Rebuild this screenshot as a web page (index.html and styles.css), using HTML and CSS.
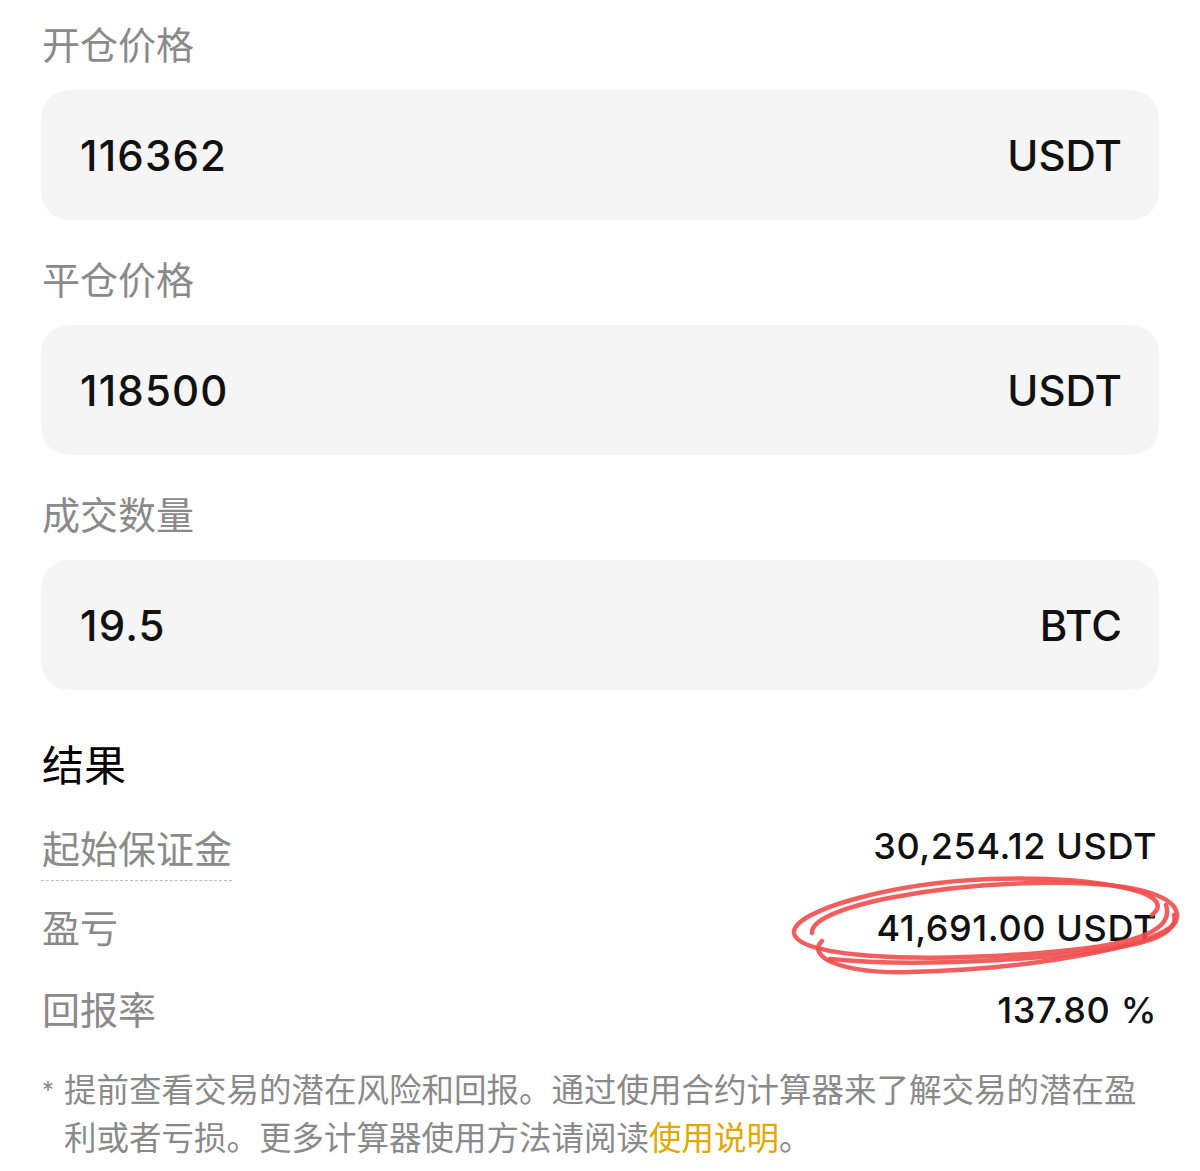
FILE: index.html
```html
<!DOCTYPE html>
<html lang="zh-CN">
<head>
    <meta charset="UTF-8">
    <meta name="viewport" content="width=device-width, initial-scale=1.0">
    <title>合约计算器</title>
    <link rel="stylesheet" href="styles.css">
</head>
<body>
    <main class="calc">
        <div class="field">
            <label class="field-label">开仓价格</label>
            <div class="field-box">
                <span class="field-value">116362</span>
                <span class="field-unit">USDT</span>
            </div>
        </div>

        <div class="field">
            <label class="field-label">平仓价格</label>
            <div class="field-box">
                <span class="field-value">118500</span>
                <span class="field-unit">USDT</span>
            </div>
        </div>

        <div class="field">
            <label class="field-label">成交数量</label>
            <div class="field-box">
                <span class="field-value">19.5</span>
                <span class="field-unit">BTC</span>
            </div>
        </div>

        <section class="result">
            <h2 class="result-title">结果</h2>
            <div class="result-row">
                <span class="result-label dotted">起始保证金</span>
                <span class="result-value">30,254.12 USDT</span>
            </div>
            <div class="result-row">
                <span class="result-label">盈亏</span>
                <span class="result-value">41,691.00 USDT</span>
                <svg class="scribble" width="393" height="105" viewBox="0 0 393 105" fill="none">
                    <path d="M362 44 C392 20 300 5 200 8 C100 12 2 40 4 62 C8 86 120 92 250 82 C330 76 386 64 376 34" />
                    <path d="M22 62 C20 36 150 10 282 12 C362 14 393 30 386 50 C376 73 250 98 120 101 C52 103 16 86 32 70" />
                    <path d="M40 88 C120 96 260 90 340 74 C370 68 388 58 384 44" />
                </svg>
            </div>
            <div class="result-row">
                <span class="result-label">回报率</span>
                <span class="result-value">137.80 %</span>
            </div>
        </section>

        <p class="note">
            <span class="note-star">*</span>
            <span class="note-text">提前查看交易的潜在风险和回报。通过使用合约计算器来了解交易的潜在盈利或者亏损。更多计算器使用方法请阅读<a href="#" class="note-link">使用说明</a>。</span>
        </p>
    </main>
</body>
</html>
```

FILE: styles.css
```css
body {
    margin: 0;
    background-color: #FFF;
    font-family: Inter, "Noto Sans CJK SC", sans-serif;
    color: #111;
}

.calc {
    padding: 20px 41px 0 41px;
}

.field {
    margin-bottom: 35px;
}

.field-label {
    display: block;
    font-size: 38px;
    line-height: 50px;
    color: #8a8a8a;
    padding-left: 1px;
}

.field-box {
    margin-top: 20px;
    height: 130px;
    background-color: #f5f5f5;
    border-radius: 28px;
    display: flex;
    justify-content: space-between;
    align-items: center;
    padding: 0 37px 0 39px;
}

.field-value,
.field-unit {
    font-size: 42px;
    font-weight: 500;
    color: #111;
}

.field-value {
    letter-spacing: 1.2px;
}

.result {
    margin-top: 48px;
}

.result-title {
    margin: 0;
    font-size: 42px;
    line-height: 56px;
    font-weight: 400;
    color: #000;
    padding-left: 1px;
}

.result-row {
    position: relative;
    height: 82px;
    display: flex;
    justify-content: space-between;
    align-items: center;
}

.result-row:first-of-type {
    margin-top: 11px;
}

.result-label {
    font-size: 38px;
    line-height: 50px;
    color: #8a8a8a;
    padding-left: 1px;
}

.result-label.dotted {
    margin-top: 12px;
    padding-bottom: 6px;
    border-bottom: 1px dashed #bbb;
}

.result-value {
    font-size: 36px;
    font-weight: 500;
    letter-spacing: 0.6px;
    color: #111;
    padding-right: 2px;
}

.scribble {
    position: absolute;
    right: -24px;
    top: -16px;
}

.scribble path {
    stroke: #f04c4c;
    stroke-width: 4.5;
    stroke-linecap: round;
    opacity: 0.9;
}

.note {
    margin: 16px 0 0 0;
    display: flex;
    font-size: 32.5px;
    line-height: 48px;
    color: #8a8a8a;
}

.note-star {
    width: 22px;
    flex-shrink: 0;
    font-size: 24px;
    padding-left: 1px;
}

.note-link {
    color: #e0a800;
    text-decoration: none;
}
```
